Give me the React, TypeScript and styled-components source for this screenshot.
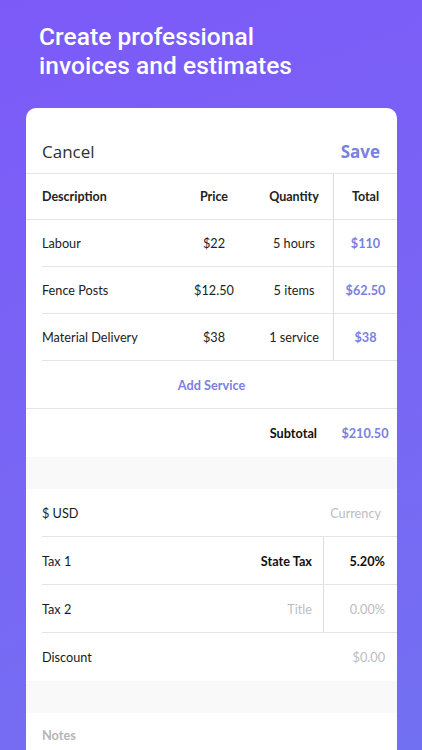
import React from "react";
import styled, { createGlobalStyle } from "styled-components";

const Global = createGlobalStyle`
  html, body { margin: 0; padding: 0; }
  body {
    width: 422px;
    height: 750px;
    overflow: hidden;
    background: linear-gradient(160deg, #7c5af8 0%, #7867f4 60%, #7270f2 100%);
    font-family: Lato, "Open Sans", sans-serif;
  }
`;

const Page = styled.div`
  width: 422px;
  height: 750px;
  overflow: hidden;
  display: flex;
  flex-direction: column;
`;

const Title = styled.h1`
  margin: 0;
  padding: 22px 0 0 39px;
  height: 108px;
  flex-shrink: 0;
  box-sizing: border-box;
  font-family: Roboto, sans-serif;
  font-weight: 500;
  font-size: 24.5px;
  line-height: 29px;
  color: #ffffff;
  letter-spacing: 0.05px;
`;

const Card = styled.div`
  margin: 0 25px 0 26px;
  flex: 1;
  background: #ffffff;
  border-radius: 10px 10px 0 0;
  display: flex;
  flex-direction: column;
`;

const TopBar = styled.div`
  height: 66px;
  flex-shrink: 0;
  box-sizing: border-box;
  display: flex;
  align-items: flex-end;
  justify-content: space-between;
  padding: 0 17px 10px 16px;
  border-bottom: 1px solid #e4e4e4;
`;

const Cancel = styled.span`
  font-family: "Open Sans", sans-serif;
  font-size: 17px;
  color: #2f2f2f;
`;

const Save = styled.span`
  font-family: "Open Sans", sans-serif;
  font-weight: 700;
  font-size: 17px;
  color: #7b7fe0;
`;

const Grid = styled.div<{ $head?: boolean; $indent?: boolean }>`
  display: grid;
  flex-shrink: 0;
  grid-template-columns: 1fr 82px 78px 64px;
  height: ${(p) => (p.$head ? 45 : 46)}px;
  margin-left: ${(p) => (p.$indent ? 16 : 0)}px;
  padding-left: ${(p) => (p.$indent ? 0 : 16)}px;
  border-bottom: 1px solid #e4e4e4;
  align-items: stretch;
  font-size: ${(p) => (p.$head ? 12.5 : 12.7)}px;
  font-weight: ${(p) => (p.$head ? 700 : 400)};
  color: #222;
`;

const Cell = styled.div<{ $align?: "left" | "center" | "right"; $blue?: boolean; $divider?: boolean; $bold?: boolean }>`
  display: flex;
  align-items: center;
  justify-content: ${(p) =>
    p.$align === "center" ? "center" : p.$align === "right" ? "flex-end" : "flex-start"};
  color: ${(p) => (p.$blue ? "#7b7fe0" : "inherit")};
  font-weight: ${(p) => (p.$bold ? 700 : "inherit")};
  border-left: ${(p) => (p.$divider ? "1px solid #dcdcdc" : "none")};
  white-space: nowrap;
`;

const SubtotalRow = styled.div`
  display: grid;
  flex-shrink: 0;
  grid-template-columns: 1fr 64px;
  height: 48px;
  font-size: 12.7px;
  font-weight: 700;
  color: #111;
`;

const SubLabel = styled.div`
  display: flex;
  align-items: center;
  justify-content: flex-end;
  padding-right: 16px;
`;

const AddRow = styled.div`
  height: 47px;
  flex-shrink: 0;
  display: flex;
  align-items: center;
  justify-content: center;
  border-bottom: 1px solid #e4e4e4;
  font-size: 12.7px;
  font-weight: 700;
  color: #7b7fe0;
`;

const Band = styled.div`
  height: 32px;
  flex-shrink: 0;
  background: #f9f9f9;
`;

const Row = styled.div<{ $line?: boolean }>`
  display: flex;
  flex-shrink: 0;
  align-items: stretch;
  height: ${(p) => (p.$line ? 47 : 48)}px;
  margin-left: 16px;
  border-bottom: ${(p) => (p.$line ? "1px solid #e4e4e4" : "none")};
  font-size: 12.7px;
  color: #1a1a1a;
`;

const Label = styled.div`
  flex: 1;
  display: flex;
  align-items: center;
`;

const Value = styled.div<{ $muted?: boolean; $bold?: boolean; $w?: number; $divider?: boolean; $pr?: number }>`
  display: flex;
  align-items: center;
  justify-content: flex-end;
  width: ${(p) => (p.$w ? `${p.$w}px` : "auto")};
  padding-right: ${(p) => p.$pr ?? 12}px;
  box-sizing: border-box;
  color: ${(p) => (p.$muted ? "#bdbdbd" : "#111")};
  font-weight: ${(p) => (p.$bold ? 700 : 400)};
  border-left: ${(p) => (p.$divider ? "1px solid #dcdcdc" : "none")};
`;

const Notes = styled.div`
  padding: 14px 16px 0;
  font-size: 12.7px;
  font-weight: 700;
  color: #b5b5b5;
`;

const items = [
  { desc: "Labour", price: "$22", qty: "5 hours", total: "$110" },
  { desc: "Fence Posts", price: "$12.50", qty: "5 items", total: "$62.50" },
  { desc: "Material Delivery", price: "$38", qty: "1 service", total: "$38" },
];

export default function App() {
  return (
    <Page>
      <Global />
      <Title>
        Create professional
        <br />
        invoices and estimates
      </Title>
      <Card>
        <TopBar>
          <Cancel>Cancel</Cancel>
          <Save>Save</Save>
        </TopBar>
        <Grid $head>
          <Cell>Description</Cell>
          <Cell $align="center">Price</Cell>
          <Cell $align="center">Quantity</Cell>
          <Cell $align="center" $divider>
            Total
          </Cell>
        </Grid>
        {items.map((it) => (
          <Grid $indent key={it.desc}>
            <Cell>{it.desc}</Cell>
            <Cell $align="center">{it.price}</Cell>
            <Cell $align="center">{it.qty}</Cell>
            <Cell $align="center" $divider $blue $bold>
              {it.total}
            </Cell>
          </Grid>
        ))}
        <AddRow>Add Service</AddRow>
        <SubtotalRow>
          <SubLabel>Subtotal</SubLabel>
          <Cell $align="center" $blue>
            $210.50
          </Cell>
        </SubtotalRow>
        <Band />
        <Row $line>
          <Label>$ USD</Label>
          <Value $muted $pr={16}>Currency</Value>
        </Row>
        <Row $line>
          <Label>Tax 1</Label>
          <Value $bold $pr={11}>State Tax</Value>
          <Value $bold $w={74} $divider>
            5.20%
          </Value>
        </Row>
        <Row $line>
          <Label>Tax 2</Label>
          <Value $muted $pr={11}>Title</Value>
          <Value $muted $w={74} $divider>
            0.00%
          </Value>
        </Row>
        <Row>
          <Label>Discount</Label>
          <Value $muted>$0.00</Value>
        </Row>
        <Band />
        <Notes>Notes</Notes>
      </Card>
    </Page>
  );
}
